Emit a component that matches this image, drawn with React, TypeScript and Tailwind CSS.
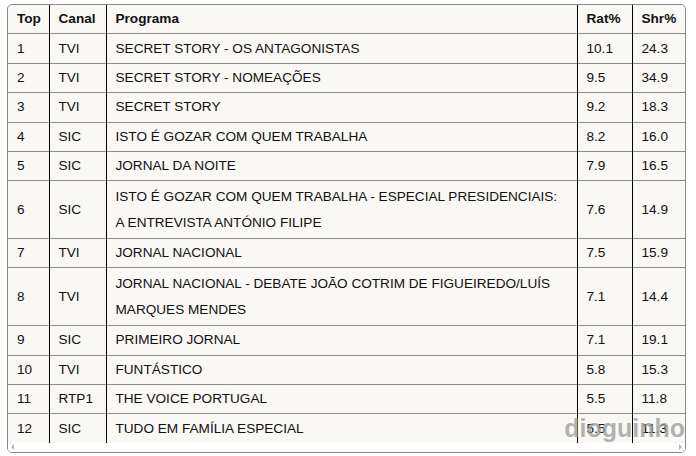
const rows: [string, string, string, string, string][] = [
  ["1", "TVI", "SECRET STORY - OS ANTAGONISTAS", "10.1", "24.3"],
  ["2", "TVI", "SECRET STORY - NOMEAÇÕES", "9.5", "34.9"],
  ["3", "TVI", "SECRET STORY", "9.2", "18.3"],
  ["4", "SIC", "ISTO É GOZAR COM QUEM TRABALHA", "8.2", "16.0"],
  ["5", "SIC", "JORNAL DA NOITE", "7.9", "16.5"],
  ["6", "SIC", "ISTO É GOZAR COM QUEM TRABALHA - ESPECIAL PRESIDENCIAIS: A ENTREVISTA ANTÓNIO FILIPE", "7.6", "14.9"],
  ["7", "TVI", "JORNAL NACIONAL", "7.5", "15.9"],
  ["8", "TVI", "JORNAL NACIONAL - DEBATE JOÃO COTRIM DE FIGUEIREDO/LUÍS MARQUES MENDES", "7.1", "14.4"],
  ["9", "SIC", "PRIMEIRO JORNAL", "7.1", "19.1"],
  ["10", "TVI", "FUNTÁSTICO", "5.8", "15.3"],
  ["11", "RTP1", "THE VOICE PORTUGAL", "5.5", "11.8"],
  ["12", "SIC", "TUDO EM FAMÍLIA ESPECIAL", "5.5", "11.3"],
];

const base = "px-[9px] leading-[26px] align-middle";
const cell = `${base} py-[1.2px]`;
const tallCell = `${base} py-[2.4px]`;

export default function App() {
  return (
    <div className="w-[696px] h-[456px] bg-white pt-[4px] pl-[7px] font-['Liberation_Sans',Arial,sans-serif] text-[13.6px] text-[#111]">
      <div className="relative w-[679px] overflow-hidden rounded-[5px] border border-[#8a8a8a] bg-[#f9f8f5]">
        <table className="w-full table-fixed border-collapse text-left">
          <colgroup>
            <col className="w-[41px]" />
            <col className="w-[57px]" />
            <col className="w-[471px]" />
            <col className="w-[55px]" />
            <col className="w-[55px]" />
          </colgroup>
          <thead>
            <tr className="border-b border-[#8c8c8c]">
              <th className={`${cell} font-bold`}>Top</th>
              <th className={`${cell} border-l border-black font-bold`}>Canal</th>
              <th className={`${cell} border-l border-black font-bold`}>Programa</th>
              <th className={`${cell} border-l border-black font-bold`}>Rat%</th>
              <th className={`${cell} border-l border-black font-bold`}>Shr%</th>
            </tr>
          </thead>
          <tbody>
            {rows.map((r, i) => {
              const c = r[2].length > 60 ? tallCell : cell;
              return (
                <tr key={r[0]} className={i < rows.length - 1 ? "border-b border-[#8c8c8c]" : ""}>
                  <td className={c}>{r[0]}</td>
                  <td className={`${c} border-l border-black`}>{r[1]}</td>
                  <td className={`${c} border-l border-black`}>{r[2]}</td>
                  <td className={`${c} border-l border-black`}>{r[3]}</td>
                  <td className={`${c} border-l border-black`}>{r[4]}</td>
                </tr>
              );
            })}
          </tbody>
        </table>
        {/* horizontal scrollbar strip */}
        <div className="flex h-[9px] items-center justify-between bg-white px-[3px]">
          <span className="h-0 w-0 border-y-[3px] border-r-[3px] border-y-transparent border-r-[#b5b5b5]" />
          <span className="h-0 w-0 border-y-[3px] border-l-[3px] border-y-transparent border-l-[#b5b5b5]" />
        </div>
        {/* watermark */}
        <div className="pointer-events-none absolute right-[0px] bottom-[11px] font-['Liberation_Sans',Arial,sans-serif] text-[25px] leading-none font-bold text-[#9a9a9a]/75">
          dioguinho
        </div>
      </div>
    </div>
  );
}
